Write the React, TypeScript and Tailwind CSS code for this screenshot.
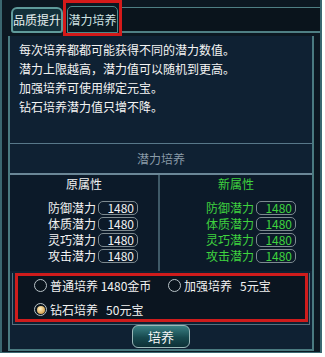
import React from 'react';

const font = { fontFamily: '"Noto Sans CJK SC", "Noto Sans", sans-serif' };

const stats = ['防御潜力', '体质潜力', '灵巧潜力', '攻击潜力'];

function Radio({ checked }: { checked?: boolean }) {
  return (
    <span className="w-[13px] h-[13px] rounded-full border border-[#b9c3c8] bg-[#0a141d] flex items-center justify-center shrink-0">
      {checked && (
        <span className="w-[8px] h-[8px] rounded-full bg-[radial-gradient(circle_at_40%_35%,#fff2c8,#e0b060_60%,#a07030)]" />
      )}
    </span>
  );
}

function StatRow({ name, green }: { name: string; green?: boolean }) {
  return (
    <div className="flex items-center h-[16px] gap-[2px]">
      <span className={green ? 'text-[#3fd23f]' : 'text-[#f2f2f2]'}>{name}</span>
      <span
        className={`w-[40px] h-[14px] rounded-[5px] border border-[#7d8a90] flex items-center justify-end pr-[3px] text-[12px] ${
          green ? 'text-[#3fd23f]' : 'text-[#f2f2f2]'
        }`}
      >
        1480
      </span>
    </div>
  );
}

export default function App() {
  return (
    <div className="w-[325px] h-[357px] bg-white text-[12px] leading-none" style={font}>
      <div className="w-[322px] h-[353px] bg-[#0c1822] border-l-2 border-r-2 border-b border-[#3b6770] flex flex-col">
        {/* tabs */}
        <div className="h-[36px] flex items-end pl-[9px] whitespace-nowrap">
          <div className="w-[52px] h-[26px] mb-[3px] rounded-t-[6px] rounded-b-[3px] border-2 border-[#5f9a9a] bg-[#12303a] text-[#e8f0f0] flex items-center justify-center">
            品质提升
          </div>
          <div className="w-[59px] h-[36px] border-[3px] border-[#d41a1a] flex items-end px-[1px]">
            <div className="w-full h-[27px] rounded-t-[5px] border border-[#4e8a8c] bg-[#0b1a22] text-[#cfe3e3] flex items-center justify-center">
              潜力培养
            </div>
          </div>
          <div className="flex-1 h-[26px] mb-[3px] border-t border-b-2 border-[#4f7f84] bg-[#0a141c]" />
        </div>

        {/* main frame */}
        <div className="flex-1 mx-[6px] mb-[1px] border-2 border-t-0 border-[#4a7a80] bg-[#0f2133] flex flex-col">
          <div className="h-[107px] pt-[4px] pl-[9px] text-[#f4f4f4] leading-[19px]">
            <div>每次培养都都可能获得不同的潜力数值。</div>
            <div>潜力上限越高，潜力值可以随机到更高。</div>
            <div>加强培养可使用绑定元宝。</div>
            <div>钻石培养潜力值只增不降。</div>
          </div>
          <div className="border-t border-[#58788a]" />
          <div className="h-[29px] flex items-center justify-center text-[#8a9ba8]">潜力培养</div>
          <div className="border-t-2 border-[#6b8797]" />

          <div className="h-[96px] flex bg-[#0c1a29]">
            <div className="w-[148px] flex flex-col pt-[3px]">
              <div className="text-center text-[#f2f2f2]">原属性</div>
              <div className="pl-[38px] pt-[10px] flex flex-col">
                {stats.map((s) => (
                  <StatRow key={s} name={s} />
                ))}
              </div>
            </div>
            <div className="w-[2px] bg-[#3f5a68]" />
            <div className="flex-1 flex flex-col pt-[3px]">
              <div className="text-center text-[#3fd23f]">新属性</div>
              <div className="pl-[46px] pt-[10px] flex flex-col">
                {stats.map((s) => (
                  <StatRow key={s} name={s} green />
                ))}
              </div>
            </div>
          </div>

          {/* options */}
          <div className="mx-[2px] mt-[2px] h-[52px] border-b border-r border-l border-[#55707e] pb-[2px]">
            <div className="ml-[2px] mr-[1px] h-[49px] border-[3px] border-[#cf1c1c] bg-[#0b1520] flex flex-col justify-center gap-[11px] pl-[16px] text-[#f2f2f2]">
              <div className="flex items-center">
                <div className="w-[134px] flex items-center gap-[3px]">
                  <Radio />
                  <span>普通培养 1480金币</span>
                </div>
                <div className="flex items-center gap-[3px]">
                  <Radio />
                  <span>加强培养&nbsp;&nbsp;&nbsp;5元宝</span>
                </div>
              </div>
              <div className="flex items-center gap-[3px]">
                <Radio checked />
                <span>钻石培养&nbsp;&nbsp;&nbsp;50元宝</span>
              </div>
            </div>
          </div>

          <div className="flex-1 flex items-end justify-center pb-[1px]">
            <button className="w-[58px] h-[23px] rounded-[6px] border border-[#9ab8b8] bg-[linear-gradient(#3a8084,#17494e_55%,#0e3036)] text-[#f4f4f4] text-[13px]">
              培养
            </button>
          </div>
        </div>
      </div>
    </div>
  );
}
